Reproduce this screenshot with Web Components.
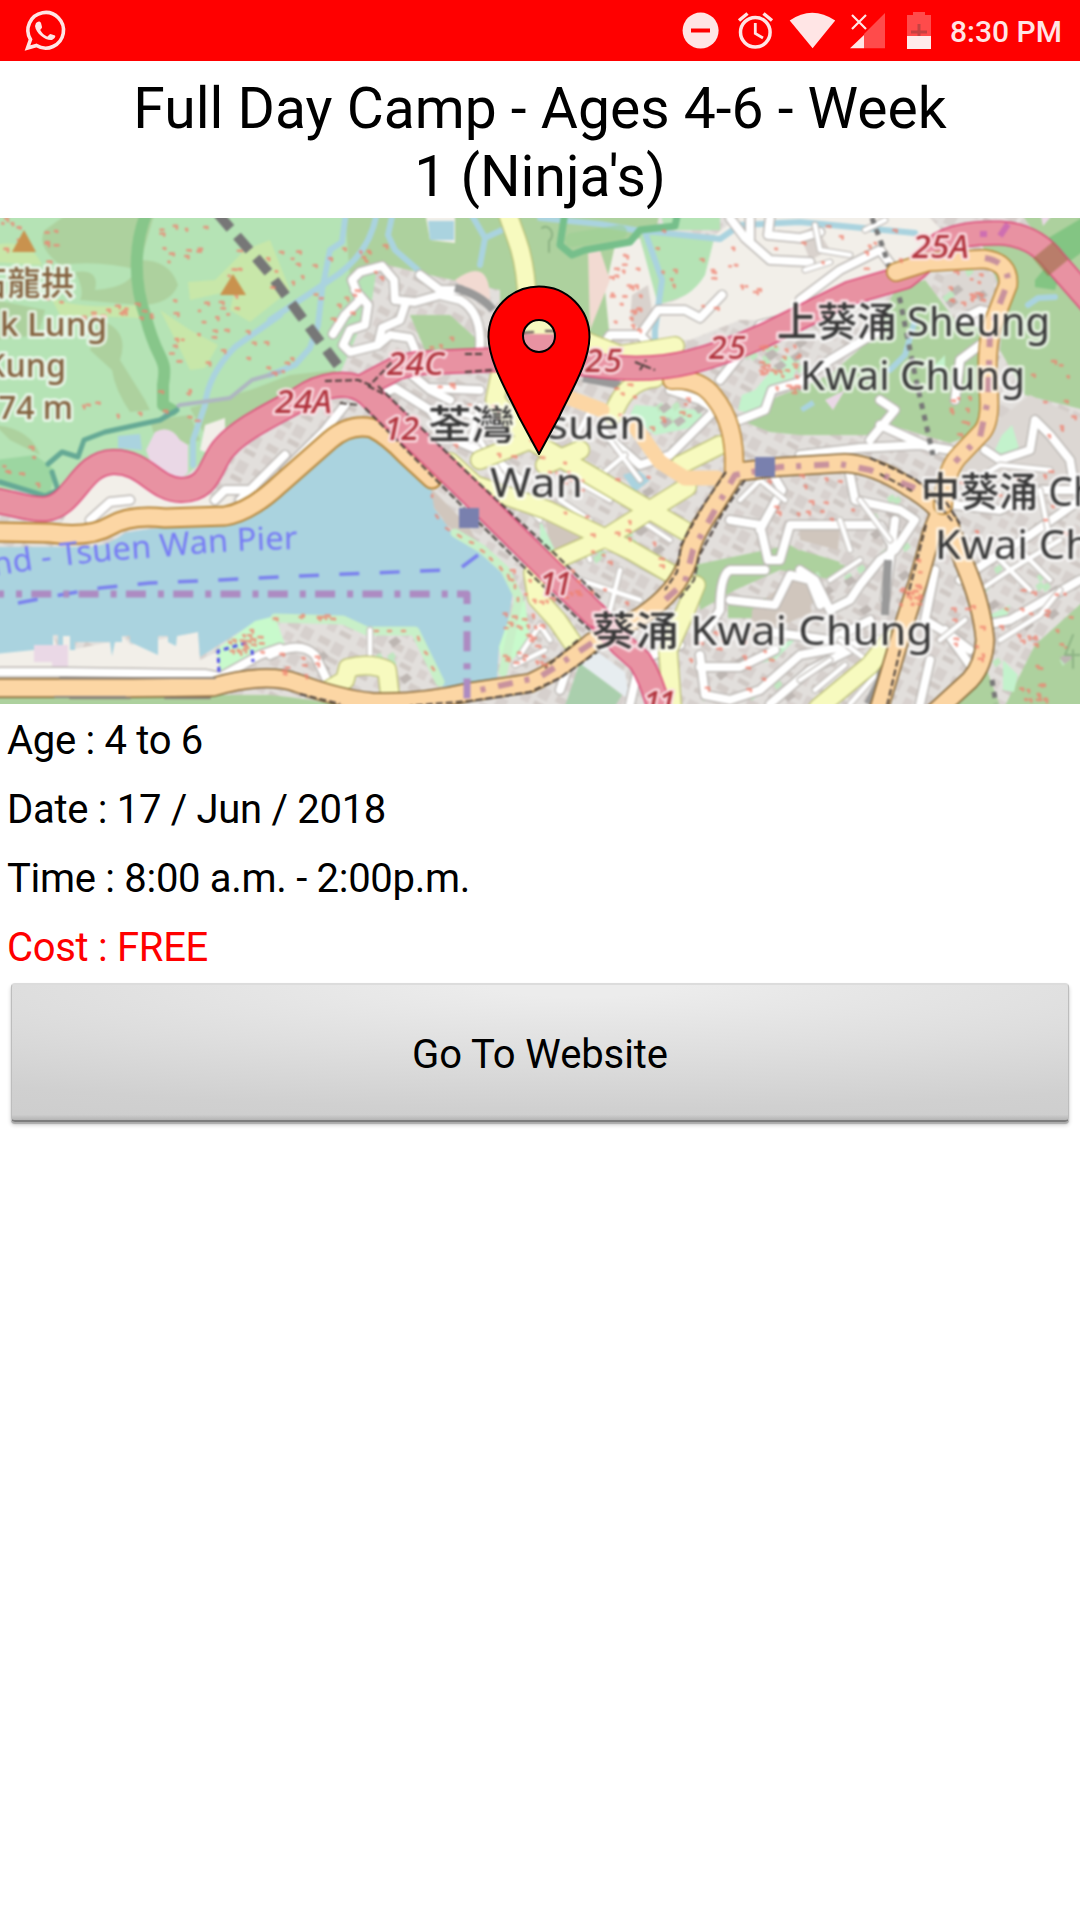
<!DOCTYPE html>
<html lang="en">
<head>
<meta charset="utf-8">
<title>Camp details</title>
<style>
html,body{margin:0;background:#fff}
body{font-family:Roboto,sans-serif;color:#000;width:1080px;height:1920px;overflow:hidden}
</style>
</head>
<body>
<camp-screen></camp-screen>

<template id="map-art">
<style>
:host{display:block;height:486px;overflow:hidden}
svg{display:block}
.soft{filter:blur(.9px)}
.ye-c{stroke:#b9bd72;stroke-width:20}
.ye{stroke:#f7fabf;stroke-width:17.5}
.w-c{stroke:#bcb8b4;stroke-width:11}
.w{stroke:#fff;stroke-width:8}
.t-c{stroke:#c4c0bc;stroke-width:7}
.t{stroke:#fff;stroke-width:4.5}
.river{stroke:#aad3df;stroke-width:6}
.trail{stroke:#87c68a;stroke-width:12}
.blk{stroke:#453c38;stroke-width:2;stroke-dasharray:7 3;stroke-linecap:butt}
text{font-family:"Noto Sans","Noto Sans CJK TC",sans-serif;paint-order:stroke;stroke:#fff;stroke-opacity:.65;stroke-width:6px;stroke-linejoin:round}
.place{font-size:40px;font-weight:450;fill:#383838}
.peak{font-size:33px;font-weight:500;fill:#84613f}
.ref{font-size:32px;font-weight:500;font-style:italic;fill:#b1333d;stroke:#fbe0e4;stroke-opacity:.9;stroke-width:5px}
.ferry{font-size:32px;font-weight:450;fill:#777bf5;stroke:none}
</style>
<svg width="1080" height="486" viewBox="0 218 1080 486" fill="none" stroke-linejoin="round" stroke-linecap="round">
<defs>
<path id="mwW" d="M-10 500C15 503 28 510 45 509C75 506 80 463 113 462C145 461 155 490 181 490C212 490 210 462 225 447C242 428 275 413 300 399C320 385 350 378 368 394L470 492L545 566L595 615"/>
<path id="mwE" d="M363 386L397 368Q415 362 440 362L540 358L600 366Q650 372 690 362Q725 353 765 335L850 293L905 277Q925 262 940 244Q960 232 1000 233Q1035 235 1055 262L1090 302"/>
<path id="mwS" d="M595 614L622 645L640 661Q652 680 660 712"/>
<path id="orW" d="M-10 532L50 533Q90 538 110 526Q130 514 165 518L225 516Q250 512 280 484L330 440Q350 423 372 428Q388 436 405 454L432 479"/>
<path id="orS" d="M-10 688L133 688L213 687Q265 672 297 683Q340 699 372 702Q420 704 470 692L530 683Q560 670 592 642L640 617Q678 592 688 560Q692 536 713 508L736 472L778 467L845 463Q875 465 907 486Q935 502 948 522L965 565Q982 605 985 640Q984 665 970 680L935 712"/>
<path id="orB" d="M943 505L932 532L918 582Q905 620 895 655L878 712"/>
<path id="orN" d="M896 272L928 262L984 259Q1010 262 1008 285L992 326Q986 350 988 385Q992 420 982 432L960 455Q945 470 943 505"/>
<path id="orM" d="M672 380Q700 378 714 397Q736 424 734 470"/>
<path id="pierLine" d="M-6 576Q75 562 160 557Q230 550 300 549"/>
<pattern id="blocks" width="34" height="29" patternUnits="userSpaceOnUse" patternTransform="rotate(28)"><rect width="34" height="29" fill="#e2dfdc"/><rect x="3" y="4" width="12" height="7" fill="#d3ccc8"/><rect x="19" y="3" width="11" height="12" fill="#d6d0cd"/><rect x="5" y="16" width="9" height="9" fill="#d8d1ce"/><rect x="19" y="19" width="12" height="5" fill="#cfc8c4"/></pattern>
</defs>
<g class="soft">
<rect x="-5" y="210" width="1090" height="500" fill="url(#blocks)"/>
<!-- woodland and grass -->
<path fill="#b5e3b5" d="M-5 212H385L372 300L335 385L270 415L205 460L180 480L150 475L110 450L60 490L-5 490Z"/>
<path fill="#add19e" d="M70 212H155L138 270Q100 260 60 265Q35 245 45 230ZM75 272Q100 268 95 290Q135 288 140 260Q170 260 178 285Q170 305 140 305L80 300Q85 290 75 272ZM100 320Q130 330 120 360L145 400L150 410L130 412Q115 390 112 370L90 350ZM-5 300L45 310L38 335L-5 340ZM-5 425Q30 428 40 455L10 440ZM150 420L190 415L200 440L160 455ZM190 408L250 390L290 375L335 370L345 385L280 405L205 435Z"/>
<path fill="#c8e7a9" d="M-5 245Q30 238 42 265L-5 262ZM50 296Q70 310 140 305L140 318L60 315ZM160 310L190 330L218 345L205 368L190 370L178 345ZM215 280L245 250L270 240L290 290L250 322L230 310L235 290L190 300L188 282Z"/>
<path fill="#add19e" d="M345 212H660L630 340L590 335L570 318L500 330L500 290L430 275L375 262L350 280Z"/>
<path fill="#b5e3b5" d="M640 235L715 235L705 285Q680 300 655 305ZM660 212H720V230H665Z"/>
<path fill="#f2efe9" d="M715 235L745 212H925L950 240L900 270L780 320L740 320L690 340L610 340L605 290L615 245L640 238L658 305Q690 300 705 275Z"/>
<path fill="#d9d2cd" d="M632 295L648 285L652 310L640 330L630 320ZM800 235L815 225L830 250L810 260Z"/>
<path fill="#add19e" d="M980 240L1030 245L1085 285V410L1025 395L1000 350L1005 300ZM1020 212H1085V275L1040 240ZM895 290L925 280L955 320L990 330L985 430L950 443L890 425L870 435L800 435L770 432L745 422L770 400L830 375L870 340Z"/>
<path fill="#75c07a" fill-opacity=".75" d="M1045 240L1085 216V250L1058 270ZM1035 280L1045 268L1058 280L1055 290L1035 287Z"/>
<path fill="#dcd7d3" d="M945 275L975 268L995 275L992 305L955 310L940 290ZM985 430L1030 395L1085 420V500L960 500V455Z"/>
<path fill="#add19e" d="M410 315L450 315L480 342L475 352L425 350ZM790 545L815 560L845 565L835 580L780 570L735 590L700 610L695 565ZM728 598H775V618H728ZM800 550L840 562L835 580L800 570Z"/>
<path fill="#add19e" d="M1085 600L1035 645L1020 675L1005 706H1085ZM-5 695H270Q320 700 350 708H-5ZM945 706L985 665L1000 706Z"/>
<path fill="#aacfad" d="M580 662L622 695L615 706H565Z"/>
<path fill="#e7edf0" d="M595 650L625 672L630 700L582 665Z"/>
<path fill="#d0c6bd" d="M800 525L840 525L838 550L800 540ZM800 575L815 600L800 615ZM752 610L800 570L812 612L750 640ZM545 520L582 538L552 553ZM428 485L470 528L478 545L450 528L434 508Z"/>
<path fill="#f2dad2" d="M455 280Q490 255 490 300L470 295ZM588 250L600 250L610 280L590 330Z"/>
<path fill="#f2efe9" d="M-5 653L35 648L50 650L53 635L58 650L63 635L70 636V650L110 642L122 636L131 645L177 636L198 632L200 660L225 648L210 690H-5ZM75 498L105 470L150 485L185 500L235 490L230 510L120 515L85 528L60 526ZM425 212H455V243L430 240ZM205 425L225 418L225 440L212 455L200 450Z"/>
<path fill="#ead8e6" d="M155 432Q170 424 180 440L188 445V472L178 483L155 475L146 450ZM825 400L845 390L833 410ZM1040 212H1055L1043 226Z"/>
<path fill="#9cd6a1" d="M-5 460L35 455L55 470L50 495L-5 485Z"/>
<!-- harbour -->
<path fill="#aad3df" d="M-5 547H90Q110 545 125 533Q160 526 225 524Q250 520 275 499L325 455Q345 436 370 436Q395 444 410 463L430 481L434 508L450 530L479 547L500 567L513 592L508 622L499 647L497 680L443 687L430 660L417 627H367L343 617L275 616L255 622L200 657L198 632L177 636L176 646L168 642V636H158V655L130 642V636L122 636V642L115 642L112 656L110 642H75V650L70 650V636H63V645L58 650V635H53V648L-5 654Z"/>
<path fill="#ead8e6" d="M34 645H68V668H52V662H34Z"/>
<path fill="#c8facc" d="M255 621L275 616L285 645L260 660L222 676L216 650ZM499 647L510 615L525 600L530 640L503 670Z"/>
<path stroke="#c8f0c8" stroke-width="9" d="M455 533L482 549L505 570L519 598L512 630L503 672M275 618L343 620L367 631H415L440 682"/>
<path fill="#c3f2cc" d="M742 395L755 390L785 355L800 360L790 385L765 402L755 415L738 410ZM930 370L945 355L945 375ZM1002 435L1012 425L1020 452L1010 460L995 450ZM1003 660L1018 675L1014 692L1003 690ZM990 615L1010 605L1005 625ZM750 665L790 640L800 635L775 660ZM635 405L700 410L705 425L655 435L630 415ZM540 520L555 550L540 560Z"/>
<path fill="#aad3df" d="M118 436L140 434L142 450L118 448ZM428 221L454 221V240H430ZM623 475L638 470L650 480L635 492ZM800 408L812 400L815 405L803 412Z"/>
<!-- streams -->
<path class="river" d="M280 315L235 347Q208 375 205 405L193 440V465M270 320L330 280Q370 255 377 212M346 212L342 242L330 250L322 290L318 325L310 348L295 365L270 375M393 212L388 235L395 250L418 270M470 212L485 238L480 265M485 238L502 230M540 218L600 224L635 230L720 239L740 225L800 222L915 233M645 232L662 280L655 330V345L665 350M1028 305L1038 298L1055 297M915 320L905 355L890 370"/>
<path stroke="#aeb6c1" stroke-width="4" d="M165 415L180 405L230 398L252 380L280 372"/>
<path class="trail" d="M147 212C133 245 134 285 146 318C158 365 168 355 163 385V405L172 410"/>
<path stroke="#65a995" stroke-width="5" d="M48 464L62 452L78 457L84 440L105 432L160 420L177 410M52 472L58 490L45 496L0 482"/>
<path stroke="#76bf8b" stroke-width="7" d="M565 212L560 245L572 255L585 250L630 242L640 230L675 226L678 212"/>
<path stroke="#9bcf92" stroke-width="14" stroke-opacity=".6" d="M572 240L620 232"/>
<g id="streets"></g>
<!-- railway and power lines -->
<path stroke="#777" stroke-width="10" stroke-dasharray="19 10" stroke-linecap="butt" d="M218 214L270 274L300 315L343 372"/>
<path stroke="#777" stroke-width="5" stroke-dasharray="6 6" stroke-linecap="butt" d="M872 218L882 245L900 300L915 375L933 455M992 680L996 704"/>
<path stroke="#999" stroke-width="8" stroke-linecap="butt" d="M455 288Q480 294 493 310M888 560L885 615M884 650L880 680L868 704M583 378L620 385"/>
<g id="yellow"></g>
<!-- primary roads and motorways -->
<path stroke="#fcd6a4" stroke-width="15" d="M567 397L602 410M636 428L660 462L685 478H717"/>
<use href="#orW" stroke="#b58435" stroke-width="21"/><use href="#orS" stroke="#80602e" stroke-width="20"/><use href="#orB" stroke="#80602e" stroke-width="20"/><use href="#orM" stroke="#b58435" stroke-width="20"/>
<use href="#orW" stroke="#fcd6a4" stroke-width="17"/><use href="#orS" stroke="#fcd6a4" stroke-width="17"/><use href="#orB" stroke="#fcd6a4" stroke-width="17"/><use href="#orM" stroke="#fcd6a4" stroke-width="17"/>
<use href="#mwS" stroke="#dc4a78" stroke-width="25"/><use href="#mwS" stroke="#e892a2" stroke-width="22"/>
<use href="#mwW" stroke="#dc4a78" stroke-width="26"/><use href="#mwE" stroke="#dc4a78" stroke-width="25"/>
<use href="#mwW" stroke="#e892a2" stroke-width="23"/><use href="#mwE" stroke="#e892a2" stroke-width="22"/>
<path stroke="#e892a2" stroke-width="20" stroke-linecap="butt" d="M518 344H562"/>
<path stroke="#5d4650" stroke-width="2" stroke-linecap="butt" d="M518 333L534 332M545 331H562"/>
<use href="#orN" stroke="#b58435" stroke-width="20"/><use href="#orN" stroke="#fcd6a4" stroke-width="17"/>
<path class="blk" d="M378 386L470 475L554 553L602 600M365 408L462 506L540 583L590 630M325 381L358 380L370 385L392 362M368 386L384 394M340 403L358 405M465 354H485M465 372L492 370M635 362L655 370M640 370L646 360"/>
<path class="blk" d="M726 472L704 504L681 545L677 572L665 590M745 480L722 514L699 556L694 580L680 598M880 474L912 491M870 458L915 479L930 492M935 500L953 522M926 525L908 595M946 502L960 524M900 650L887 706M578 640L545 668M600 650L560 678L530 692L470 701L410 706M300 694L340 704"/>
<path stroke="#b77b9b" stroke-opacity=".75" stroke-width="6" stroke-dasharray="15 13 5 12" stroke-linecap="butt" d="M985 258Q1008 262 1008 282L990 330L988 400L980 437L955 462M915 488L870 470L840 464L780 467L735 475L715 510L693 550L685 582L665 600M592 643L540 677L480 690"/>
<path stroke="#9a7045" stroke-opacity=".6" stroke-width="26" stroke-linecap="butt" d="M1043 250L1058 268"/>
<path stroke="#b34ac0" stroke-opacity=".5" stroke-width="6" stroke-linecap="butt" d="M980 234H987M1000 236L1008 224"/>
<path stroke="#8b8279" stroke-width="2" d="M60 678H215M55 697H125M70 698H130M165 698H210"/>
<!-- ferry route and boundary -->
<path stroke="#7a80ee" stroke-width="3.500" stroke-dasharray="20 20.400" stroke-linecap="butt" d="M-22 609L18 603L60 595L100 588L150 583L220 580L300 576L445 570M462 567L478 555"/>
<path stroke="#ad8bc2" stroke-width="7" stroke-dasharray="20 12 6 9.300" stroke-linecap="butt" d="M-16 594H467V700"/>
<path stroke="#544fe8" stroke-width="3" stroke-dasharray="5 4" stroke-linecap="butt" d="M246 643L218 651L219 672M252 650L253 662"/>
<g id="dots"></g>
<path fill="#c9924e" d="M24 230L36 252H12ZM233 274L246 295H220Z"/>
<path fill="#7980ae" d="M459 508H479V528H459ZM755 457H775V477H755Z"/>
<path stroke="#8cb384" stroke-width="2" d="M1073 635L1065 655H1080M1073 650V668M542 228A6 7 0 1 1 549 241V252"/>
<g>
<text class="peak" x="-26" y="295" textLength="100">石龍拱</text>
<text class="peak" x="0" y="336" textLength="107" lengthAdjust="spacingAndGlyphs">k Lung</text>
<text class="peak" x="-15" y="377" textLength="81" lengthAdjust="spacingAndGlyphs">Kung</text>
<text class="peak" x="-2" y="419" textLength="75" lengthAdjust="spacingAndGlyphs">74 m</text>
<text class="ref" x="387" y="375" textLength="57" lengthAdjust="spacingAndGlyphs">24C</text>
<text class="ref" x="275" y="413" textLength="57" lengthAdjust="spacingAndGlyphs">24A</text>
<text class="ref" x="384" y="440" textLength="35">12</text>
<text class="ref" x="585" y="372" textLength="37">25</text>
<text class="ref" x="709" y="359" textLength="37">25</text>
<text class="ref" x="912" y="258" textLength="57" lengthAdjust="spacingAndGlyphs">25A</text>
<text class="ref" x="539" y="595" textLength="33">11</text>
<text class="ref" x="643" y="714" textLength="33">11</text>
<text class="place" x="777" y="336" textLength="273" lengthAdjust="spacingAndGlyphs">上葵涌 Sheung</text>
<text class="place" x="800" y="390" textLength="225" lengthAdjust="spacingAndGlyphs">Kwai Chung</text>
<text class="place" x="428" y="439" textLength="218" lengthAdjust="spacingAndGlyphs">荃灣 Tsuen</text>
<text class="place" x="490" y="497" textLength="93" lengthAdjust="spacingAndGlyphs">Wan</text>
<text class="place" x="921" y="506" textLength="176" lengthAdjust="spacingAndGlyphs">中葵涌 Ch</text>
<text class="place" x="935" y="559" textLength="156" lengthAdjust="spacingAndGlyphs">Kwai Ch</text>
<text class="place" x="592" y="645" textLength="341" lengthAdjust="spacingAndGlyphs">葵涌 Kwai Chung</text>
<text class="ferry"><textPath href="#pierLine" textLength="305" lengthAdjust="spacingAndGlyphs">nd - Tsuen Wan Pier</textPath></text>
</g>
</g>
<path fill="#f00" stroke="#000" stroke-width="2" fill-rule="evenodd" d="M539 454L519 417C508 393 489 363 488.500 337A50.500 50.500 0 0 1 589.500 337C589 363 570 393 559 417ZM555 336A16 16 0 1 0 523 336A16 16 0 1 0 555 336Z"/>
</svg>
</template>

<script>
const NS = 'http://www.w3.org/2000/svg';

class StatusBar extends HTMLElement {
  constructor() {
    super();
    this.attachShadow({mode: 'open'}).innerHTML = `
<style>
:host{display:flex;justify-content:space-between;height:61px;background:#f00;color:#ffe5e5}
svg{display:block}
.end{display:flex}
span{box-sizing:border-box;width:130px;text-align:right;font:500 30px/61px Roboto,sans-serif;padding:1px 21px 0 0;white-space:nowrap}
</style>
<svg width="80" height="61" fill="none" stroke="#ffe5e5"><path stroke-width="3.600" stroke-linejoin="miter" d="M27.500 48L30.500 39.500A17.800 17.800 0 1 1 36.500 45.500Z"/><path fill="#ffe5e5" stroke="none" d="M36 23C38 21 40 21 41 23L42 27C42 29 40 29 40.500 30.500C42 33 44 35 47 36.500C48 37 49 34 50.500 34L55 35.500C56 37 54 39 52 40C46 41 36 34 35 26Z"/></svg>
<div class="end">
<svg width="290" height="61" viewBox="660 0 290 61">
<g fill="#ffe5e5"><circle cx="700.600" cy="30.600" r="18"/><path d="M789.700 20.500Q812 5 835.200 20.500L812.600 48.300Z"/><path d="M850 48.300L864 35V48.300Z"/><path fill="#fff" fill-opacity=".92" d="M907 36H931V49H907Z"/></g>
<path fill="#f00" d="M691 28.500H710V32.500H691Z"/>
<g fill="none" stroke="#ffe5e5"><circle cx="755.300" cy="32.300" r="14.800" stroke-width="3.500"/><path stroke-width="2.800" d="M755.300 23V33.500L763 38"/><path stroke-width="3.500" d="M739 20.500L747.500 13.500M772 20.500L763.500 13.500"/><path stroke-width="2.200" d="M852 15L866 29M866 15L852 29"/></g>
<path fill="#ff4b4b" d="M885 13V48.300H864V34ZM907 15H913V12H925V15H931V36H907Z"/>
<path fill="#c54242" d="M917.500 24H920.500V30.500H927V33.500H920.500V36H917.500V33.500H911V30.500H917.500Z"/>
</svg>
<span><slot></slot></span></div>`;
  }
}

class EventTitle extends HTMLElement {
  constructor() {
    super();
    this.attachShadow({mode: 'open'}).innerHTML = `
<style>:host{display:block;box-sizing:border-box;height:157px;padding:14px 125px 0;text-align:center;font-size:57px;line-height:68px}</style><slot></slot>`;
  }
}

class AreaMap extends HTMLElement {
  constructor() {
    super();
    const root = this.attachShadow({mode: 'open'});
    root.append(document.getElementById('map-art').content.cloneNode(true));
    const add = (host, cls, d) => {
      const p = document.createElementNS(NS, 'path');
      p.setAttribute('class', cls);
      p.setAttribute('d', d);
      host.append(p);
      return p;
    };
    const streets = root.getElementById('streets');

    // Small courtyards and roofs, seeded so that every load is identical.
    let seed = 7;
    const rnd = () => (seed = (seed * 16807) % 2147483647) / 2147483647;
    let greens = '', greys = '';
    for (const [x, y, w, h, n] of [[560,460,100,130,14],[740,340,60,50,16],[850,470,60,120,12],[980,560,90,110,14],[700,650,130,50,9],[940,270,50,35,6],[290,640,110,40,8],[800,560,60,50,6],[620,400,80,40,8]])
      for (let i = 0; i < n; i++) {
        const a = (x + rnd() * w).toFixed(1), b = (y + rnd() * h).toFixed(1);
        if (i % 2) greens += `M${a} ${b}l6 -4l3 5l-6 5z`;
        else greys += `M${a} ${b}l8 -5l5 5l-8 6z`;
      }
    add(streets, '', greens).setAttribute('fill', '#bfe8c0');
    add(streets, '', greys).setAttribute('fill', '#bdb6b2');

    const wide = [
      'M333 334L345 315L360 300L352 280L360 272L382 266L394 280L395 300L415 302L440 295L460 300Q482 312 480 348M405 305L400 320L382 328L378 345L350 352L343 345L350 330L365 325L368 305L355 290M378 345L390 335L410 338L415 350L412 375L430 390L450 400M420 275L440 290L460 290',
      'M600 350L610 335L640 335L658 310H685L700 318L722 295M640 335L650 345M730 218L745 238L770 260L810 262M750 218V240M770 218L768 235L800 238L820 232M800 300L840 270L880 250L895 270M780 320L760 325L740 355L720 380',
      'M285 470L325 430L345 405M380 395L395 388L430 410L440 425L455 440L490 455L520 480M430 388L480 390M600 430L640 465L670 455L700 425L715 410L700 400L670 390',
      'M90 520L110 502L130 500M215 500L225 490L250 490M240 500L285 455',
      'M0 672H65L205 674L225 678M215 680L260 655L280 648M270 655Q300 640 315 655L327 680',
      'M740 420L765 410L772 390L800 382L830 360L880 330M800 455L860 448L920 445L950 450M880 425L935 450M870 440L895 410L880 400M985 450L1000 460L1030 450L1035 420L1050 435L1070 460L1075 490M960 320L980 310L1000 315M955 400L960 360L980 345',
      'M848 465L855 500L900 510L915 520L895 550L880 560L860 585L850 600L830 610L815 580L800 570M770 470L782 490L760 530M730 520L760 525L768 560L780 560L790 525H880L895 550M765 570H730Q720 575 720 610L700 640M730 600L775 605L790 575L810 580L820 605M770 632L830 640L870 620',
      'M560 690L570 660L600 640M630 704L640 660L680 645M700 655L705 695L730 700L760 690L800 655L880 640M700 667H740L775 650M770 704L810 670L850 650',
      'M960 580L990 560L1030 535L1080 500M955 505L1000 510L1040 490L1080 490M985 625L1010 620L1080 580M935 570L925 620L950 635L970 650M930 660L920 704M945 630L970 665M895 520L885 600'
    ];
    wide.forEach(d => add(streets, 'w-c', d));
    wide.forEach(d => add(streets, 'w', d));
    const thin = [
      'M740 500L760 480L785 500M600 470L615 490L640 500M560 500L590 520M565 475L610 500M580 580L610 590L640 600M590 560L585 545L615 550L640 565L670 580M620 570L610 610M640 520L670 540',
      'M450 410L500 425M480 405L470 440M480 440L510 490L540 520M590 410L570 450M610 440L640 480M595 480L625 455',
      'M865 230L885 220M815 225L820 250L850 255M805 270L830 262M840 640L880 670L850 704M800 680L830 660M815 690L845 665',
      'M975 480L1000 465L1050 470M1000 560L1030 590M1020 550L1050 580M980 590L1010 570L1060 540M1000 640L1040 615L1060 590M940 640L965 620M840 520L850 550M860 500L890 540M830 580L860 560M1040 490L1050 540',
      'M520 655L540 625L550 640M515 665L545 650M370 630V665'
    ];
    thin.forEach(d => add(streets, 't-c', d));
    thin.forEach(d => add(streets, 't', d));
    const yellow = root.getElementById('yellow');
    const sec = [
      'M507 212L517 240Q526 265 527 300L530 325',
      'M500 375L495 400L530 440L590 475L687 532', 'M450 462L475 485L547 510L630 550L680 579',
      'M687 487L650 510L607 537L555 560L545 570', 'M530 440L480 460M580 450L545 465',
      'M533 573L537 598L557 620L572 642', 'M613 415Q625 380 655 378', 'M530 327L560 330L590 343L620 355L675 346',
      'M720 445L680 465', 'M696 585L685 612L668 650L672 706', 'M890 640L870 665L818 708',
      'M328 690L345 680L348 668Q370 662 387 670L390 696'
    ];
    sec.forEach(d => add(yellow, 'ye-c', d));
    sec.forEach(d => add(yellow, 'ye', d));

    // Footpaths: short salmon specks.
    const areas = [[0,218,60,40,9],[45,225,10,80,7],[60,302,95,16,16],[150,225,60,40,12],[170,295,60,70,18],[190,250,60,60,8],[235,330,60,50,9],[240,250,130,70,20],
      [340,230,45,50,8],[80,400,60,20,5],[150,390,50,40,6],[610,255,30,75,24],[655,230,20,60,6],[700,245,80,65,14],[760,345,40,50,30],[945,270,40,35,16],[950,390,20,45,10],[1030,360,45,80,10],
      [270,615,65,4,8],[228,630,40,25,20],[280,650,40,30,10],[503,600,42,65,30],[505,570,75,25,10],[545,460,120,110,24],[545,570,90,40,8],[690,630,90,60,14],[760,470,100,50,14],[900,560,20,50,18],[950,600,40,60,10],[1000,590,75,60,20],[1020,665,25,38,14],[960,470,110,70,9],[600,380,100,50,12],[445,400,110,70,14],[800,218,110,60,10],[410,330,50,60,6],[0,440,40,45,8]];
    let reds = 'M432 495v2M436 515l2 3M446 528l3 2M458 535l3 2M470 542l3 1M481 550l3 2M490 558l2 2M500 567l2 3M508 575l1 3M515 585v3M518 598v3M375 631h3M388 631h3M402 631h3M418 637l1 3M425 652l2 2M432 667l2 3';
    for (const [x, y, w, h, n] of areas)
      for (let i = 0; i < n; i++) {
        const a = (x + rnd() * w).toFixed(1), b = (y + rnd() * h).toFixed(1);
        reds += `M${a} ${b}h${(1 + rnd() * 3).toFixed(1)}v${(rnd() * 3).toFixed(1)}`;
      }
    add(root.getElementById('dots'), '', reds).setAttribute('style', 'stroke:#f0806f;stroke-width:2.6;stroke-opacity:.75');
  }
}

class InfoRow extends HTMLElement {
  constructor() {
    super();
    this.attachShadow({mode: 'open'}).innerHTML = `
<style>:host{display:block;box-sizing:border-box;height:69px;padding:2px 7px 0;font-size:40px;line-height:69px;letter-spacing:-.3px;white-space:nowrap}:host([free]){color:#f00}</style><slot></slot>`;
  }
}

class SiteButton extends HTMLElement {
  constructor() {
    super();
    this.attachShadow({mode: 'open'}).innerHTML = `
<style>
:host{display:block;padding:3px 11px 0}
button{display:block;width:100%;height:139px;box-sizing:border-box;border:1px solid #bdbdbd;border-top:2px solid #dcdcdc;border-bottom:2px solid #7d7d7d;border-radius:4px;padding:3px 0 0;
background:linear-gradient(#cfcfcf00 96%,#b4b4b4 100%),radial-gradient(ellipse 110% 108% at 54% 0,#ececec 8%,#dedede 48%,#d0d0d0 85%,#cecece);
box-shadow:0 2px 1px #aaa,0 3px 4px #0003;font:40px Roboto,sans-serif;letter-spacing:-.1px;color:#000}
</style><button><slot></slot></button>`;
  }
}

class CampScreen extends HTMLElement {
  constructor() {
    super();
    this.attachShadow({mode: 'open'}).innerHTML = `
<style>:host{display:flex;flex-direction:column;width:1080px;height:1920px;background:#fff}</style>
<status-bar>8:30 PM</status-bar>
<event-title>Full Day Camp - Ages 4-6 - Week 1 (Ninja's)</event-title>
<area-map></area-map>
<info-row>Age : 4 to 6</info-row>
<info-row>Date : 17 / Jun / 2018</info-row>
<info-row>Time : 8:00 a.m. - 2:00p.m.</info-row>
<info-row free>Cost : FREE</info-row>
<site-button>Go To Website</site-button>`;
  }
}

customElements.define('status-bar', StatusBar);
customElements.define('event-title', EventTitle);
customElements.define('area-map', AreaMap);
customElements.define('info-row', InfoRow);
customElements.define('site-button', SiteButton);
customElements.define('camp-screen', CampScreen);
</script>
</body>
</html>
